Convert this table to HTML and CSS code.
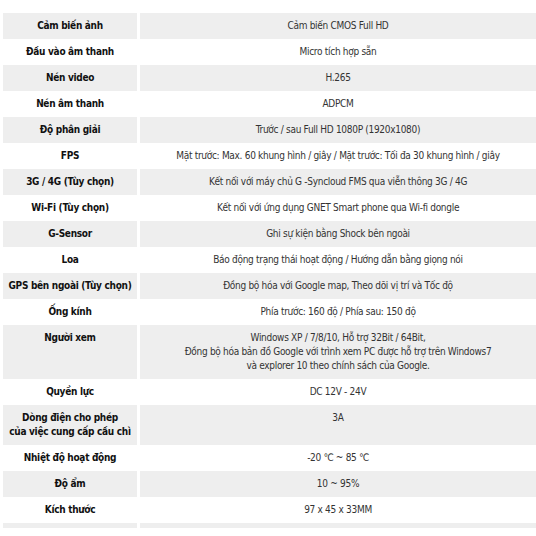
FILE: index.html
```html
<!DOCTYPE html>
<html lang="vi">
<head>
<meta charset="utf-8">
<title>Thông số kỹ thuật</title>
<link rel="stylesheet" href="styles.css">
</head>
<body>
<table class="spec">
  <colgroup><col class="c-label"><col class="c-value"></colgroup>
  <tbody>
    <tr class="alt"><th>Cảm biến ảnh</th><td>Cảm biến CMOS Full HD</td></tr>
    <tr><th>Đầu vào âm thanh</th><td>Micro tích hợp sẵn</td></tr>
    <tr class="alt"><th>Nén video</th><td>H.265</td></tr>
    <tr><th>Nén âm thanh</th><td>ADPCM</td></tr>
    <tr class="alt"><th>Độ phân giải</th><td>Trước / sau Full HD 1080P (1920x1080)</td></tr>
    <tr><th>FPS</th><td>Mặt trước: Max. 60 khung hình / giây / Mặt trước: Tối đa 30 khung hình / giây</td></tr>
    <tr class="alt"><th>3G / 4G (Tùy chọn)</th><td>Kết nối với máy chủ G -Syncloud FMS qua viễn thông 3G / 4G</td></tr>
    <tr><th>Wi-Fi (Tùy chọn)</th><td>Kết nối với ứng dụng GNET Smart phone qua Wi-fi dongle</td></tr>
    <tr class="alt"><th>G-Sensor</th><td>Ghi sự kiện bằng Shock bên ngoài</td></tr>
    <tr><th>Loa</th><td>Báo động trạng thái hoạt động / Hướng dẫn bằng giọng nói</td></tr>
    <tr class="alt"><th>GPS bên ngoài (Tùy chọn)</th><td>Đồng bộ hóa với Google map, Theo dõi vị trí và Tốc độ</td></tr>
    <tr><th>Ống kính</th><td>Phía trước: 160 độ / Phía sau: 150 độ</td></tr>
    <tr class="alt"><th>Người xem</th><td>Windows XP / 7/8/10, Hỗ trợ 32Bit / 64Bit,<br>Đồng bộ hóa bản đồ Google với trình xem PC được hỗ trợ trên Windows7<br>và explorer 10 theo chính sách của Google.</td></tr>
    <tr><th>Quyền lực</th><td>DC 12V - 24V</td></tr>
    <tr class="alt"><th>Dòng điện cho phép<br>của việc cung cấp cầu chì</th><td>3A</td></tr>
    <tr><th>Nhiệt độ hoạt động</th><td>-20 ℃ ~ 85 ℃</td></tr>
    <tr class="alt"><th>Độ ẩm</th><td>10 ~ 95%</td></tr>
    <tr><th>Kích thước</th><td>97 x 45 x 33MM</td></tr>
    <tr class="alt tail"><th></th><td></td></tr>
  </tbody>
</table>
</body>
</html>
```

FILE: styles.css
```css
html, body {
  margin: 0;
  padding: 0;
  background: #ffffff;
  overflow: hidden;
}
body {
  font-family: "DejaVu Sans Condensed", "DejaVu Sans", Verdana, sans-serif;
  font-size: 10px;
  letter-spacing: -0.3px;
  color: #333333;
}
.spec {
  margin-top: 13px;
  width: 539px;
  table-layout: fixed;
  border-collapse: separate;
  border-spacing: 3px 0;
}
.c-label { width: 134px; }
.c-value { width: 396px; }
.spec th,
.spec td {
  padding: 6px 0;
  line-height: 14px;
  text-align: center;
  vertical-align: top;
  white-space: nowrap;
}
.spec th {
  font-weight: bold;
  color: #111111;
}
.spec td {
  color: #333333;
}
.spec tr.alt th,
.spec tr.alt td {
  background: #eeeeee;
}
.spec tr.tail th,
.spec tr.tail td {
  padding: 0;
  height: 5px;
}
```
